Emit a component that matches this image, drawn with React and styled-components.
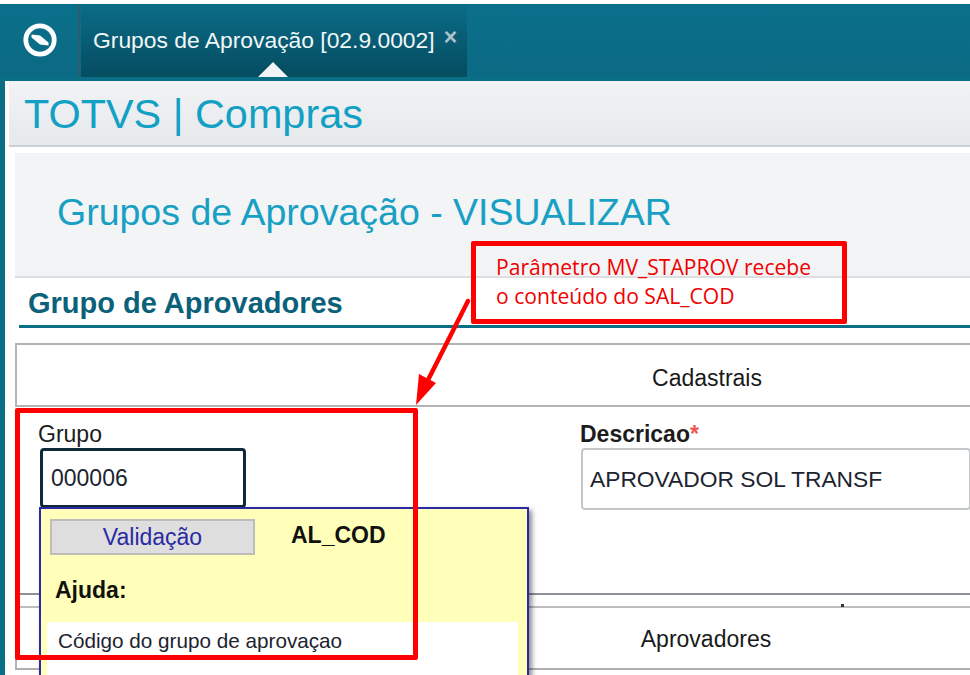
import styled, { createGlobalStyle } from 'styled-components';

const GlobalStyle = createGlobalStyle`
  html, body {
    margin: 0;
    padding: 0;
    background: #fff;
  }
  body {
    font-family: "Liberation Sans", Arial, sans-serif;
    overflow: hidden;
  }
`;

const Screen = styled.div`
  position: relative;
  width: 970px;
  height: 675px;
  overflow: hidden;
  padding-top: 4px;
  box-sizing: border-box;
  background: #fff;
`;

const TopBar = styled.div`
  display: flex;
  height: 73px;
  background: linear-gradient(#0b6f8b, #0b6a84);
`;

const LogoCell = styled.div`
  width: 80px;
  display: flex;
  align-items: center;
  justify-content: center;
  padding: 0 0 2px 2px;
  box-sizing: border-box;
  border-right: 2px solid #2a5f72;
`;

const ActiveTab = styled.div`
  position: relative;
  margin-left: 1px;
  width: 386px;
  display: flex;
  align-items: flex-start;
  padding: 23px 0 0 12px;
  box-sizing: border-box;
  background: linear-gradient(#0b6c87, #054c60);
  color: #f2f7f8;
  font-size: 22.85px;
  white-space: nowrap;
`;

const TabClose = styled.span`
  margin-left: 9px;
  margin-top: -3px;
  color: #a9c4cd;
  font-size: 23px;
  font-weight: 700;
`;

const TabPointer = styled.span`
  position: absolute;
  left: 177px;
  bottom: 0;
  border-left: 15px solid transparent;
  border-right: 15px solid transparent;
  border-bottom: 15px solid #f3f4f5;
`;

const Shell = styled.div`
  height: 598px;
  box-sizing: border-box;
  border-left: 5px solid #0b6e87;
  border-top: 4px solid #0b6e87;
`;

const BrandBar = styled.div`
  height: 66px;
  padding: 4px 0 0 15px;
  box-sizing: border-box;
  display: flex;
  align-items: center;
  background: linear-gradient(#f1f3f5, #e6e9ec);
  border-bottom: 2px solid #ccd0d2;
  color: #12a0c4;
  font-size: 41.4px;
  line-height: 1;
  margin-left: 4px;
`;

const Body = styled.div`
  padding: 6px 0 0 10px;
`;

const TitleBand = styled.div`
  height: 125px;
  box-sizing: border-box;
  padding: 37px 0 0 42px;
  background: #f2f4f5;
  border-bottom: 2px solid #dcdedf;
  color: #18a0c4;
  font-size: 37.5px;
  line-height: 44px;
`;

const SectionHead = styled.h2`
  margin: 0 0 0 4px;
  height: 50px;
  box-sizing: border-box;
  padding: 9px 0 0 9px;
  border-bottom: 3px solid #0b6e87;
  color: #0b617a;
  font-size: 29px;
  line-height: 32px;
  font-weight: 700;
`;

const TabHeader = styled.div`
  margin-top: 15px;
  height: 64px;
  box-sizing: border-box;
  border: 2px solid #b4b4b4;
  border-right: none;
  display: flex;
  align-items: center;
  justify-content: center;
  padding: 6px 0 0 427px;
  color: #1a1a1a;
  font-size: 23px;
`;

const FormRow = styled.div`
  display: grid;
  grid-template-columns: 565px 1fr;
  height: 186px;
  box-sizing: border-box;
  padding-top: 13px;
`;

const Field = styled.div`
  padding-left: ${props => props.$inset}px;
`;

const FieldLabel = styled.div`
  color: #1c1c1c;
  font-size: 23px;
  line-height: 28px;
  font-weight: ${props => (props.$bold ? 700 : 400)};
`;

const Required = styled.span`
  color: #e8584f;
`;

const Input = styled.div`
  display: flex;
  align-items: center;
  box-sizing: border-box;
  width: ${props => props.$width};
  height: ${props => props.$height}px;
  margin-left: ${props => props.$offset}px;
  padding: 1px 0 0 ${props => (props.$focused ? 8 : 7)}px;
  border: ${props => (props.$focused ? '3px solid #10293a' : '2px solid #c3c7c9')};
  border-radius: 4px;
  color: #1c2430;
  font-size: ${props => (props.$focused ? 23 : 22.8)}px;
  background: #fff;
`;

const RuleGroup = styled.div`
  border-top: 2px solid #8b8f96;
  padding-top: 11px;
`;

const TabHeaderLower = styled.div`
  height: 64px;
  box-sizing: border-box;
  border-top: 2px solid #bdbdbd;
  border-bottom: 2px solid #b0b0b0;
  border-left: 2px solid #b4b4b4;
  padding: 2px 0 0 425px;
  display: flex;
  align-items: center;
  justify-content: center;
  color: #1a1a1a;
  font-size: 23px;
`;

const Dot = styled.span`
  position: absolute;
  left: 841px;
  top: 604px;
  width: 3px;
  height: 3px;
  background: #333;
`;

const HelpPopup = styled.div`
  position: absolute;
  left: 39px;
  top: 507px;
  width: 490px;
  height: 190px;
  box-sizing: border-box;
  padding: 10px 9px 0 6px;
  background: #ffffb9;
  border: 2px solid #2a2aa5;
  box-shadow: 3px 3px 5px rgba(0, 0, 0, 0.45);
`;

const PopupHead = styled.div`
  display: flex;
  align-items: center;
  padding-left: 3px;
`;

const ValidationTab = styled.div`
  width: 205px;
  height: 36px;
  box-sizing: border-box;
  border: 2px solid #bdbdbd;
  background: #dedede;
  display: flex;
  align-items: center;
  justify-content: center;
  color: #2a2aa5;
  font-size: 23px;
`;

const FieldCode = styled.div`
  margin-left: 36px;
  margin-top: -3px;
  color: #111;
  font-size: 23px;
  font-weight: 700;
`;

const HelpTitle = styled.div`
  margin: 21px 0 0 8px;
  color: #111;
  font-size: 23px;
  line-height: 28px;
  font-weight: 700;
`;

const HelpText = styled.div`
  margin-top: 18px;
  height: 80px;
  box-sizing: border-box;
  padding: 7px 0 0 11px;
  background: #fff;
  color: #1c2430;
  font-size: 20.7px;
  line-height: 24px;
`;

const Callout = styled.div`
  position: absolute;
  box-sizing: border-box;
  border: 5px solid #ff0000;
  border-radius: 2px;
`;

const NoteBox = styled(Callout)`
  left: 471px;
  top: 241px;
  width: 376px;
  height: 83px;
  padding: 6px 0 0 20px;
  color: #f00000;
  font-family: "Open Sans", "Noto Sans", sans-serif;
  font-size: 21.1px;
  line-height: 29px;
  white-space: nowrap;
`;

const FieldBox = styled(Callout)`
  left: 15px;
  top: 408px;
  width: 403px;
  height: 252px;
`;

const ArrowLayer = styled.svg`
  position: absolute;
  left: 400px;
  top: 290px;
`;

const TotvsLogo = () => (
  <svg width="36" height="36" viewBox="0 0 36 36">
    <circle cx="18" cy="18" r="14.2" fill="none" stroke="#fff" strokeWidth="4.8" />
    <path d="M9.5 12.5 L18 13.5 L26.5 20.5 L26.5 23.5 L18 22.5 L9.5 15.5 Z" fill="#fff" />
  </svg>
);

export default function App() {
  return (
    <>
      <GlobalStyle />
      <Screen>
        <TopBar>
          <LogoCell>
            <TotvsLogo />
          </LogoCell>
          <ActiveTab>
            Grupos de Aprovação [02.9.0002]
            <TabClose>×</TabClose>
            <TabPointer />
          </ActiveTab>
        </TopBar>
        <Shell>
          <BrandBar>TOTVS | Compras</BrandBar>
          <Body>
            <TitleBand>Grupos de Aprovação - VISUALIZAR</TitleBand>
            <SectionHead>Grupo de Aprovadores</SectionHead>
            <TabHeader>Cadastrais</TabHeader>
            <FormRow>
              <Field $inset={23}>
                <FieldLabel>Grupo</FieldLabel>
                <Input $width="206px" $height={60} $offset={2} $focused>000006</Input>
              </Field>
              <Field $inset={0}>
                <FieldLabel $bold>Descricao<Required>*</Required></FieldLabel>
                <Input $width="100%" $height={62} $offset={1}>APROVADOR SOL TRANSF</Input>
              </Field>
            </FormRow>
            <RuleGroup>
              <TabHeaderLower>Aprovadores</TabHeaderLower>
            </RuleGroup>
          </Body>
        </Shell>
        <Dot />
        <HelpPopup>
          <PopupHead>
            <ValidationTab>Validação</ValidationTab>
            <FieldCode>AL_COD</FieldCode>
          </PopupHead>
          <HelpTitle>Ajuda:</HelpTitle>
          <HelpText>Código do grupo de aprovaçao</HelpText>
        </HelpPopup>
        <NoteBox>
          Parâmetro MV_STAPROV recebe<br />o conteúdo do SAL_COD
        </NoteBox>
        <FieldBox />
        <ArrowLayer width="80" height="125" viewBox="0 0 80 125">
          <line x1="68" y1="11" x2="27" y2="92" stroke="#ff0000" strokeWidth="4.5" strokeLinecap="round" />
          <polygon points="16,115 19,84 36,93" fill="#ff0000" />
        </ArrowLayer>
      </Screen>
    </>
  );
}
